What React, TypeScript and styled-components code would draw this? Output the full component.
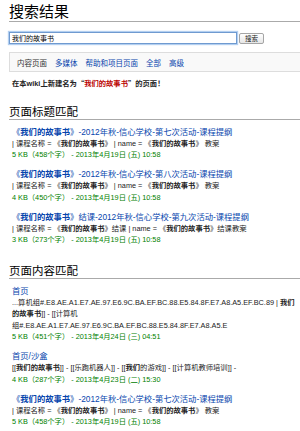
import React from "react";
import styled, { createGlobalStyle } from "styled-components";

const GlobalStyle = createGlobalStyle`
  html, body {
    margin: 0;
    padding: 0;
    background: #fff;
  }
  body {
    font-family: "Liberation Sans", "Noto Sans CJK SC", sans-serif;
    color: #222;
  }
`;

const Page = styled.div`
  width: 300px;
  box-sizing: border-box;
  padding-left: 9px;
  overflow: hidden;
`;

const Title = styled.h1`
  margin: 0;
  padding-top: 3px;
  font-size: 15px;
  line-height: 18px;
  font-weight: normal;
  color: #000;
  border-bottom: 1px solid #aaa;
`;

const SearchRow = styled.form`
  display: flex;
  align-items: center;
  gap: 2px;
  margin-top: 10px;
`;

const SearchInput = styled.input`
  width: 228px;
  height: 12px;
  box-sizing: border-box;
  margin: 0;
  padding: 0 2px;
  border: 1px solid #6f9ad0;
  box-shadow: 0 0 1px 1px #b3cff0;
  font-family: inherit;
  font-size: 7px;
  color: #000;
  outline: none;
`;

const SearchButton = styled.button`
  width: 25px;
  height: 11px;
  box-sizing: border-box;
  margin: 0;
  padding: 0;
  border: 1px solid #a5a5a5;
  border-radius: 2px;
  background: linear-gradient(#ffffff, #e6e6e6);
  font-family: inherit;
  font-size: 6.5px;
  line-height: 9px;
  color: #222;
`;

const Tabs = styled.div`
  display: flex;
  align-items: center;
  gap: 8px;
  height: 20px;
  box-sizing: border-box;
  margin-top: 8px;
  padding-left: 7px;
  border: 1px solid #ddd;
  border-right: none;
  background: #f9f9f9;
  font-size: 7.5px;
`;

const Tab = styled.a<{ $current?: boolean }>`
  color: ${(p) => (p.$current ? "#333" : "#0645ad")};
  text-decoration: none;
`;

const CreateNote = styled.p`
  margin: 6px 0 0 3px;
  font-size: 7.3px;
  line-height: 11.5px;
  font-weight: bold;
  color: #222;
`;

// full-width CJK quotation marks
const Quote = styled.span`
  font-family: "Noto Sans CJK SC", sans-serif;
`;

const NewLink = styled.a`
  color: #ba0000;
  text-decoration: none;
`;

const SectionHeading = styled.h2<{ $gap: number }>`
  margin: ${(p) => p.$gap}px 0 0 0;
  font-size: 11.5px;
  line-height: 14px;
  font-weight: normal;
  color: #000;
  border-bottom: 1px solid #aaa;
`;

const ResultList = styled.ul`
  margin: 6px 0 0 3px;
  padding: 0;
  list-style: none;
`;

const Result = styled.li`
  margin-bottom: 7.5px;
`;

const ResultTitle = styled.div`
  font-size: 8.3px;
  line-height: 12px;

  a {
    color: #0645ad;
    text-decoration: none;
  }
`;

const Snippet = styled.div`
  font-size: 7.3px;
  line-height: 11.5px;
  color: #222;
  white-space: nowrap;
`;

const Meta = styled.div`
  font-size: 7.3px;
  line-height: 11.5px;
  color: #008000;
`;

const Match = styled.b`
  font-weight: bold;
`;

// bold every piece of the search term
const hl = (text: string) =>
  text.split(/(我们的故事书|我们|的故事书)/).map((part, i) =>
    part === "我们的故事书" || part === "我们" || part === "的故事书" ? (
      <Match key={i}>{part}</Match>
    ) : (
      <React.Fragment key={i}>{part}</React.Fragment>
    )
  );

interface SearchHit {
  title: string;
  lines: string[];
  meta: string;
}

const SNIPPET_7 = "| 课程名称 = 《我们的故事书》 | name = 《我们的故事书》 教案";

const titleHits: SearchHit[] = [
  {
    title: "《我们的故事书》-2012年秋-信心学校-第七次活动-课程提纲",
    lines: [SNIPPET_7],
    meta: "5 KB（458个字） - 2013年4月19日 (五) 10:58",
  },
  {
    title: "《我们的故事书》-2012年秋-信心学校-第八次活动-课程提纲",
    lines: [SNIPPET_7],
    meta: "4 KB（450个字） - 2013年4月19日 (五) 10:58",
  },
  {
    title: "《我们的故事书》结课-2012年秋-信心学校-第九次活动-课程提纲",
    lines: ["| 课程名称 = 《我们的故事书》结课 | name = 《我们的故事书》结课教案"],
    meta: "3 KB（273个字） - 2013年4月19日 (五) 10:58",
  },
];

const textHits: SearchHit[] = [
  {
    title: "首页",
    lines: [
      "...算机组#.E8.AE.A1.E7.AE.97.E6.9C.BA.EF.BC.88.E5.84.8F.E7.A8.A5.EF.BC.89 | 我们",
      "的故事书]] - [[计算机",
      "组#.E8.AE.A1.E7.AE.97.E6.9C.BA.EF.BC.88.E5.84.8F.E7.A8.A5.E",
    ],
    meta: "5 KB（451个字） - 2013年4月24日 (三) 04:51",
  },
  {
    title: "首页/沙盒",
    lines: ["[[我们的故事书]] - [[乐跑机器人]] - [[我们的游戏]] - [[计算机教师培训]] -"],
    meta: "4 KB（287个字） - 2013年4月23日 (二) 15:30",
  },
  {
    title: "《我们的故事书》-2012年秋-信心学校-第七次活动-课程提纲",
    lines: [SNIPPET_7],
    meta: "5 KB（458个字） - 2013年4月19日 (五) 10:58",
  },
];

const HitList: React.FC<{ hits: SearchHit[] }> = ({ hits }) => (
  <ResultList>
    {hits.map((hit, i) => (
      <Result key={i}>
        <ResultTitle>
          <a href="#">{hl(hit.title)}</a>
        </ResultTitle>
        {hit.lines.map((line, j) => (
          <Snippet key={j}>{hl(line)}</Snippet>
        ))}
        <Meta>{hit.meta}</Meta>
      </Result>
    ))}
  </ResultList>
);

export default function App() {
  return (
    <>
      <GlobalStyle />
      <Page>
        <Title>搜索结果</Title>
        <SearchRow onSubmit={(e) => e.preventDefault()}>
          <SearchInput defaultValue="我们的故事书" />
          <SearchButton type="submit">搜索</SearchButton>
        </SearchRow>
        <Tabs>
          <Tab $current>内容页面</Tab>
          <Tab href="#">多媒体</Tab>
          <Tab href="#">帮助和项目页面</Tab>
          <Tab href="#">全部</Tab>
          <Tab href="#">高级</Tab>
        </Tabs>
        <CreateNote>
          在本wiki上新建名为<Quote>“</Quote>
          <NewLink href="#">我们的故事书</NewLink>
          <Quote>”</Quote>的页面！
        </CreateNote>
        <SectionHeading $gap={15}>页面标题匹配</SectionHeading>
        <HitList hits={titleHits} />
        <SectionHeading $gap={18}>页面内容匹配</SectionHeading>
        <HitList hits={textHits} />
      </Page>
    </>
  );
}
